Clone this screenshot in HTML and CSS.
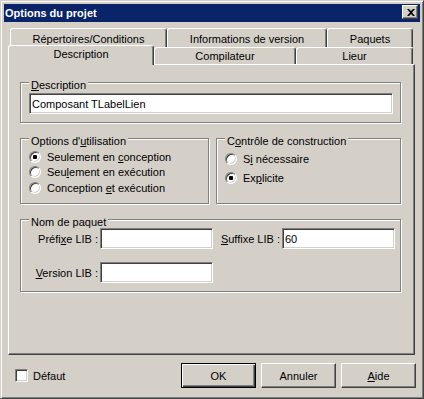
FILE: index.html
```html
<!DOCTYPE html>
<html>
<head>
    <title>Options du projet</title>
    <link rel="stylesheet" href="styles.css">
</head>
<body>
    <div class="window">
        <div class="titlebar">
            <span class="title">Options du projet</span>
            <button class="close" type="button">
                <svg width="8" height="7" viewBox="0 0 8 7"><path d="M0 0H2L4 2L6 0H8L5 3.5L8 7H6L4 5L2 7H0L3 3.5Z" fill="#000"/></svg>
            </button>
        </div>

        <div class="tabs">
            <div class="tab-row back">
                <div class="tab w-rep">Répertoires/Conditions</div>
                <div class="tab w-info">Informations de version</div>
                <div class="tab w-paq">Paquets</div>
            </div>
            <div class="tab-row front">
                <div class="tab selected w-desc">Description</div>
                <div class="tab w-comp">Compilateur</div>
                <div class="tab w-lieur">Lieur</div>
            </div>
        </div>

        <div class="panel">
            <!-- Description -->
            <fieldset class="group group-desc">
                <legend><u>D</u>escription</legend>
                <input class="edit edit-desc" type="text" value="Composant TLabelLien">
            </fieldset>

            <div class="group-row">
                <fieldset class="group group-options">
                    <legend>Options d'<u>u</u>tilisation</legend>
                    <div class="radio-list">
                        <div class="radio-row"><span class="radio checked"></span><span>Seulement en <u>c</u>onception</span></div>
                        <div class="radio-row"><span class="radio"></span><span>Seu<u>l</u>ement en exécution</span></div>
                        <div class="radio-row"><span class="radio"></span><span>Conception <u>e</u>t exécution</span></div>
                    </div>
                </fieldset>
                <fieldset class="group group-build">
                    <legend>C<u>o</u>ntrôle de construction</legend>
                    <div class="radio-list">
                        <div class="radio-row"><span class="radio"></span><span>S<u>i</u> nécessaire</span></div>
                        <div class="radio-row"><span class="radio checked"></span><span>Ex<u>p</u>licite</span></div>
                    </div>
                </fieldset>
            </div>

            <!-- Nom de paquet -->
            <fieldset class="group group-pkg">
                <legend>Nom de paquet</legend>
                <div class="fields">
                    <span class="field-label">Préfi<u>x</u>e LIB :</span>
                    <input class="edit" type="text" value="">
                    <span class="field-label"><u>S</u>uffixe LIB :</span>
                    <input class="edit" type="text" value="60">
                    <span class="field-label"><u>V</u>ersion LIB :</span>
                    <input class="edit" type="text" value="">
                </div>
            </fieldset>
        </div>

        <div class="footer">
            <span class="check"></span>
            <span class="check-label">Défaut</span>
            <div class="buttons">
                <button class="btn default" type="button">OK</button>
                <button class="btn" type="button">Annuler</button>
                <button class="btn" type="button"><u>A</u>ide</button>
            </div>
        </div>
    </div>
</body>
</html>
```

FILE: styles.css
```css
body {
    margin: 0;
    background: #d4d0c8;
    font-family: "Liberation Sans", Arial, sans-serif;
    font-size: 11px;
    color: #000;
}
.window {
    width: 424px;
    height: 399px;
    box-sizing: border-box;
    display: flex;
    flex-direction: column;
    padding: 3px;
    border: 1px solid;
    border-color: #d4d0c8 #404040 #404040 #d4d0c8;
    box-shadow: inset 1px 1px #fff, inset -1px -1px #808080;
}
.titlebar {
    height: 18px;
    display: flex;
    justify-content: space-between;
    align-items: center;
    padding: 0 2px 0 1px;
    background: #0a246a;
}
.title {
    color: #fff;
    font-weight: bold;
    line-height: 13px;
}
.close {
    align-self: flex-start;
    margin-top: 1px;
    width: 16px;
    height: 14px;
    box-sizing: border-box;
    padding: 0 0 0 1px;
    display: flex;
    align-items: center;
    justify-content: center;
    background: #d4d0c8;
    border: 1px solid;
    border-color: #fff #404040 #404040 #fff;
    box-shadow: inset -1px -1px #808080;
}

/* tabs */
.tabs {
    margin: 6px 0 0 4px;
}
.tab-row {
    display: flex;
    align-items: flex-start;
}
.tab-row.back {
    height: 19px;
    margin-left: 2px;
}
.tab-row.front {
    height: 17px;
}
.tab {
    box-sizing: border-box;
    text-align: center;
    white-space: nowrap;
    line-height: 13px;
    background: #d4d0c8;
    border-top: 1px solid #fff;
    border-left: 1px solid #fff;
    border-right: 1px solid #404040;
    border-radius: 3px 3px 0 0;
    box-shadow: inset -1px 0 #808080;
}
.back .tab {
    height: 19px;
    padding-top: 4px;
}
.front .tab {
    height: 17px;
    padding-top: 2px;
}
.front .tab.selected {
    position: relative;
    z-index: 1;
    height: 20px;
    margin-top: -2px;
}
.w-rep { width: 157px; }
.w-info { width: 160px; }
.w-paq { width: 86px; }
.w-desc { width: 146px; }
.w-comp { width: 142px; }
.w-lieur { width: 117px; }

.panel {
    width: 407px;
    height: 291px;
    box-sizing: border-box;
    margin-left: 4px;
    padding: 9px 12px 0 11px;
    border: 1px solid;
    border-color: #fff #404040 #404040 #fff;
    box-shadow: inset -1px -1px #808080;
}

/* group boxes */
.group {
    margin: 0;
    padding: 0;
    min-width: 0;
    border: 1px solid #808080;
    box-shadow: inset 1px 1px #fff, 1px 1px #fff;
}
.group legend {
    margin-left: 8px;
    padding: 5px 2px 0;
    line-height: 12px;
    background: #d4d0c8;
}
.group-desc {
    width: 381px;
    box-sizing: border-box;
}
.edit {
    display: block;
    width: 113px;
    height: 21px;
    box-sizing: border-box;
    margin: 0;
    padding: 0 2px;
    font: inherit;
    color: #000;
    background: #fff;
    border: 1px solid;
    border-color: #808080 #fff #fff #808080;
    box-shadow: inset 1px 1px #404040, inset -1px -1px #d4d0c8;
    outline: none;
}
.edit-desc {
    width: 364px;
    margin: 2px 0 8px 8px;
}

.group-row {
    display: flex;
    gap: 7px;
    margin-top: 7px;
}
.group-options {
    width: 189px;
    box-sizing: border-box;
    flex: none;
}
.group-build {
    width: 185px;
    box-sizing: border-box;
    flex: none;
}
.radio-list {
    padding: 2px 0 7px;
}
.radio-row {
    display: flex;
    align-items: center;
    white-space: nowrap;
}
.group-options .radio-row {
    height: 16px;
}
.group-options .radio-row:first-child {
    height: 15px;
}
.group-build .radio-row {
    height: 19px;
}
.radio {
    position: relative;
    flex: none;
    width: 12px;
    height: 12px;
    box-sizing: border-box;
    margin: 0 6px 0 8px;
    border-radius: 50%;
    background: #fff;
    border: 1px solid;
    border-color: #808080 #fff #fff #808080;
    box-shadow: inset 1px 1px #404040, inset -1px -1px #d4d0c8;
}
.radio.checked::after {
    content: '';
    position: absolute;
    left: 3px;
    top: 3px;
    width: 4px;
    height: 4px;
    border-radius: 1px;
    background: #000;
}

.group-pkg {
    width: 381px;
    box-sizing: border-box;
    margin-top: 7px;
}
.fields {
    display: grid;
    grid-template-columns: 79px 113px 69px 113px;
    row-gap: 13px;
    align-items: center;
    padding-bottom: 8px;
}
.field-label {
    text-align: right;
    padding-right: 2px;
    white-space: nowrap;
}

/* bottom row */
.footer {
    display: flex;
    align-items: center;
    height: 25px;
    margin-top: 8px;
}
.check {
    width: 13px;
    height: 13px;
    box-sizing: border-box;
    margin: 0 5px 0 11px;
    background: #fff;
    border: 1px solid;
    border-color: #808080 #fff #fff #808080;
    box-shadow: inset 1px 1px #404040, inset -1px -1px #d4d0c8;
}
.buttons {
    display: flex;
    gap: 5px;
    margin: 0 4px 0 auto;
}
.btn {
    width: 75px;
    height: 25px;
    box-sizing: border-box;
    padding: 0;
    font: inherit;
    color: #000;
    background: #d4d0c8;
    border: 1px solid;
    border-color: #fff #404040 #404040 #fff;
    box-shadow: inset -1px -1px #808080;
}
.btn.default {
    border-color: #000;
    box-shadow: inset 1px 1px #fff, inset -1px -1px #404040, inset -2px -2px #808080;
}
```
